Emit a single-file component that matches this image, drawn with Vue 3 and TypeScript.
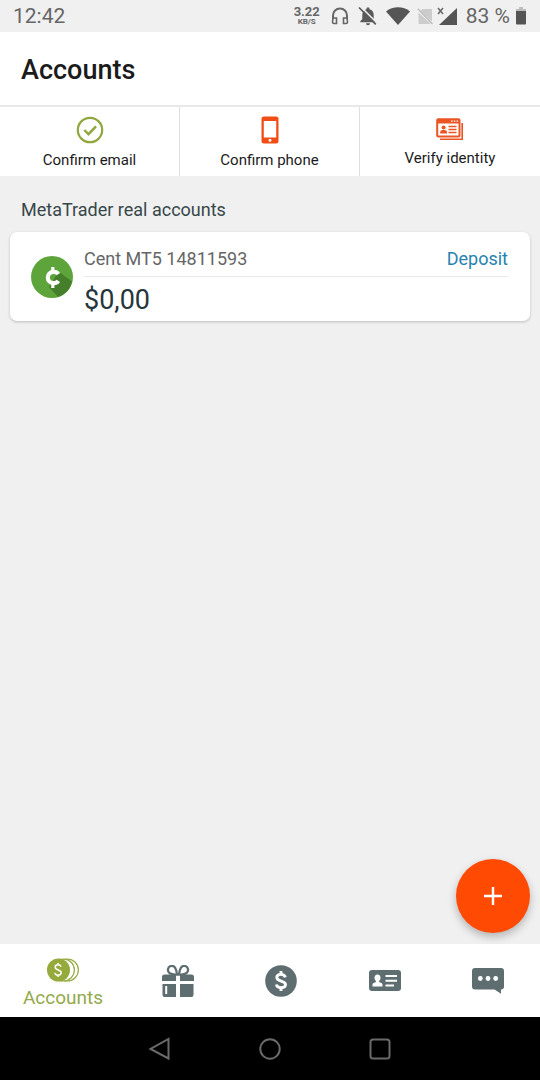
<script setup lang="ts">
import { ref } from 'vue'

interface Step {
  id: string
  label: string
}

interface Account {
  name: string
  balance: string
}

interface NavItem {
  id: string
  label: string
}

const steps: Step[] = [
  { id: 'email', label: 'Confirm email' },
  { id: 'phone', label: 'Confirm phone' },
  { id: 'identity', label: 'Verify identity' },
]

const accounts: Account[] = [{ name: 'Cent MT5 14811593', balance: '$0,00' }]

const navItems: NavItem[] = [
  { id: 'accounts', label: 'Accounts' },
  { id: 'bonuses', label: 'Bonuses' },
  { id: 'finance', label: 'Finance' },
  { id: 'profile', label: 'Profile' },
  { id: 'chat', label: 'Chat' },
]

const active = ref<string>('accounts')
</script>

<template>
  <div class="screen">
    <div class="status">
      <span class="clock">12:42</span>
      <span class="speed"><b>3.22</b><small>KB/S</small></span>
      <svg class="headset" width="18" height="18" viewBox="0 0 18 18">
        <path d="M2 12V8.500a7 7 0 0 1 14 0V12" fill="none" stroke="#666" stroke-width="2" />
        <path d="M2 11h3.500v5.500H3a1.500 1.500 0 0 1-1.500-1.500zM16 11h-3.500v5.500H15a1.500 1.500 0 0 0 1.500-1.500z" fill="none" stroke="#666" stroke-width="1.600" />
      </svg>
      <svg class="bell" width="20" height="20" viewBox="0 0 20 20">
        <path d="M10 1.200a1.500 1.500 0 0 1 1.500 1.500v.6c2.900.7 4.200 3 4.200 5.700v4l2 2.300v1H2.300v-1l2-2.300V9c0-2.700 1.300-5 4.200-5.700v-.6A1.500 1.500 0 0 1 10 1.200zM8 17.200h4a2 2 0 0 1-4 0z" fill="#595959" />
        <path d="M2.500.500 19 17" stroke="#f0f0f0" stroke-width="1.600" />
        <path d="M1 1.500 17.800 18.300" stroke="#595959" stroke-width="1.700" />
      </svg>
      <svg class="wifi" width="24" height="18" viewBox="0 0 24 18">
        <path d="M0 4.500C3.500 1.600 7.500.3 12 .3s8.500 1.300 12 4.200L12 18z" fill="#555" />
      </svg>
      <svg class="sim" width="16" height="17" viewBox="0 0 16 17">
        <path d="M5.500 1H15v12.500L3.500 2.900zM1.500 4.500 13.800 16H1.500z" fill="#ccc" />
        <path d="M.800.800 15.500 16" stroke="#bbb" stroke-width="1.400" />
      </svg>
      <svg class="signal" width="20" height="19" viewBox="0 0 20 19">
        <path d="M20 1v17H2z" fill="#555" />
        <path d="m1 1 5 6M6 1 1 7" stroke="#666" stroke-width="1.500" />
      </svg>
      <span class="percent">83 %</span>
      <svg class="battery" width="10" height="18" viewBox="0 0 10 18">
        <path d="M3 0h4v2h3v3H0V2h3z" fill="#bdbdbd" />
        <path d="M0 4h10v12.500a1 1 0 0 1-1 1H1a1 1 0 0 1-1-1z" fill="#555" />
      </svg>
    </div>

    <header class="title-bar">
      <h1>Accounts</h1>
    </header>

    <div class="steps">
      <button v-for="step in steps" :key="step.id" type="button" class="step" :class="step.id">
        <svg v-if="step.id === 'email'" width="28" height="28" viewBox="0 0 28 28" fill="none" stroke="#8fa73e">
          <circle cx="14" cy="14" r="12.200" stroke-width="2.200" />
          <path d="m8.300 14 4.200 4.200 7.500-7.800" stroke-width="2.400" />
        </svg>
        <svg v-else-if="step.id === 'phone'" width="28" height="28" viewBox="0 0 28 28">
          <path fill-rule="evenodd" fill="#f04e16" d="M8 .5h12a2.500 2.500 0 0 1 2.500 2.500v22a2.500 2.500 0 0 1-2.500 2.500H8A2.500 2.500 0 0 1 5.500 25V3A2.500 2.500 0 0 1 8 .5zM7.800 5v16.500h12.400V5zM14 22.800a1.500 1.500 0 1 0 0 3 1.500 1.500 0 0 0 0-3z" />
        </svg>
        <svg v-else width="28" height="24" viewBox="0 0 28 24">
          <path fill="none" stroke="#ea5523" stroke-width="1.600" d="M26.200 5v16.200H4" />
          <rect x="1.200" y="1.200" width="22.300" height="17.200" rx="1" fill="#fff" stroke="#ea5523" stroke-width="2" />
          <path d="M1 1h23v4.500H1z" fill="#ea5523" />
          <path d="M15 3.200h1.500M17.800 3.200h1.500M20.600 3.200h1.500" stroke="#fff" stroke-width="1.200" />
          <circle cx="7.600" cy="9.600" r="2" fill="#ea5523" />
          <path d="M4.200 15.500v-1.300c0-1.800 1.500-2.200 3.400-2.200s3.400.4 3.400 2.200v1.300z" fill="#ea5523" />
          <path d="M12.500 8.500h8M12.500 11.500h8M12.500 14.500h8" stroke="#ea5523" stroke-width="1.300" />
        </svg>
        <span>{{ step.label }}</span>
      </button>
    </div>

    <main class="content">
      <h2>MetaTrader real accounts</h2>
      <section v-for="account in accounts" :key="account.name" class="card">
        <svg class="coin" width="42" height="42" viewBox="0 0 42 42">
          <circle cx="21" cy="21" r="21" fill="#5da43b" />
          <path d="M27.500 15.500 41 25.500a21 21 0 0 1-14 15.600L18 31z" fill="#467f2c" />
          <path d="M27.300 18.200c-1-1.500-2.600-2.300-4.600-2.300-3.500 0-5.900 2.200-5.900 5.600s2.400 5.600 5.900 5.600c2 0 3.600-.8 4.600-2.300" fill="none" stroke="#fff" stroke-width="4.200" />
          <path d="M20.200 11h3.200v4h-3.200zM20.200 28h3.200v4h-3.200z" fill="#fff" />
        </svg>
        <div class="details">
          <div class="row">
            <span class="name">{{ account.name }}</span>
            <a href="#deposit">Deposit</a>
          </div>
          <div class="balance">{{ account.balance }}</div>
        </div>
      </section>
      <button type="button" class="add" aria-label="Open account">
        <svg width="20" height="20" viewBox="0 0 20 20">
          <path d="M10 1v18M1 10h18" stroke="#fff" stroke-width="2.400" />
        </svg>
      </button>
    </main>

    <nav class="tabs">
      <button
        v-for="item in navItems"
        :key="item.id"
        type="button"
        class="tab"
        :class="{ active: active === item.id }"
        :aria-label="item.label"
        @click="active = item.id"
      >
        <svg v-if="item.id === 'accounts'" width="32" height="24" viewBox="0 0 32 24">
          <g fill="#fff" stroke="#97ab45" stroke-width="1.200">
            <circle cx="20.500" cy="12" r="10.900" />
            <circle cx="16.500" cy="12" r="10.900" />
          </g>
          <circle cx="11.500" cy="12" r="11.500" fill="#94aa3a" />
          <path d="M14 8.700C13.600 7.400 12.500 6.800 11.100 6.800c-1.700 0-2.900 1-2.900 2.400 0 3.300 6 2.200 6 5.400 0 1.500-1.300 2.600-3.100 2.600-1.600 0-2.900-.8-3.200-2.300M11.100 5v2M11.100 17v2" fill="none" stroke="#fff" stroke-width="1.500" />
        </svg>
        <svg v-else-if="item.id === 'bonuses'" width="32" height="32" viewBox="0 1 32 32">
          <path d="M15 10.500C8 11 5.500 8.500 6 5.200c.5-3.600 5-4.500 7-1.500 1.100 1.700 1.800 4 2 6.800zM17 10.500c7 .5 9.500-2 9-5.300-.5-3.600-5-4.500-7-1.500-1.100 1.700-1.800 4-2 6.800z" fill="none" stroke="#5d6d70" stroke-width="2.300" />
          <path d="M2.500 10.500H14V17H0v-4a2.500 2.500 0 0 1 2.500-2.500zM18 10.500h11.500A2.500 2.500 0 0 1 32 13v4H18zM.5 20H14v13H2.500a2 2 0 0 1-2-2zM18 20h13.500v11a2 2 0 0 1-2 2H18z" fill="#5d6d70" />
          <path d="M4.200 22v8" stroke="#fff" stroke-width="2" />
        </svg>
        <svg v-else-if="item.id === 'finance'" width="32" height="32" viewBox="0 0 32 32">
          <circle cx="16" cy="16" r="15.800" fill="#5d6d70" />
          <path d="M20.300 12.400c-.5-2-2.100-3-4.300-3-2.500 0-4.200 1.300-4.200 3.200 0 4.500 8.700 2.500 8.700 7 0 1.900-1.900 3.100-4.400 3.100s-4.300-1.200-4.700-3.200M16 6v3.500M16 22.500V26" fill="none" stroke="#fff" stroke-width="2.900" />
        </svg>
        <svg v-else-if="item.id === 'profile'" width="32" height="22" viewBox="0 0 32 22">
          <rect width="32" height="21" rx="3" fill="#5d6d70" />
          <path d="M8.500 4.500c2 0 3 1.300 3 3.200 0 1.500-.6 2.500-1.400 3.200v1.100l2.200.9c.9.400 1.200 1 1.200 2v1.600h-10v-1.600c0-1 .3-1.600 1.200-2l2.200-.9v-1.100c-.8-.7-1.400-1.700-1.400-3.200 0-1.900 1-3.200 3-3.200z" fill="#fff" />
          <path d="M16.500 6h11.500M16.500 10.700h11.500M16.500 15.400H25" stroke="#fff" stroke-width="2" />
        </svg>
        <svg v-else width="32" height="26" viewBox="0 0 32 26">
          <path d="M3 0h26a3 3 0 0 1 3 3v15.500a3 3 0 0 1-3 3v4.300L22.500 21.500H3a3 3 0 0 1-3-3V3a3 3 0 0 1 3-3z" fill="#5d6d70" />
          <g fill="#fff">
            <circle cx="8.300" cy="10.500" r="2.400" />
            <circle cx="16" cy="10.500" r="2.400" />
            <circle cx="23.700" cy="10.500" r="2.400" />
          </g>
        </svg>
        <span v-if="active === item.id">{{ item.label }}</span>
      </button>
    </nav>

    <div class="system">
      <button type="button" aria-label="Back">
        <svg width="24" height="24" viewBox="0 0 24 24"><path d="M20.500 2v19.500L2.500 12z" /></svg>
      </button>
      <button type="button" aria-label="Home">
        <svg width="24" height="24" viewBox="0 0 24 24"><circle cx="12" cy="12" r="9.700" /></svg>
      </button>
      <button type="button" aria-label="Recent apps">
        <svg width="24" height="24" viewBox="0 0 24 24"><rect x="2.500" y="2.500" width="19" height="19" rx="2.500" /></svg>
      </button>
    </div>
  </div>
</template>

<style>
body {
  margin: 0;
}
</style>

<style scoped>
.screen {
  min-height: 100vh;
  display: flex;
  flex-direction: column;
  background: #f0f0f0;
  font-family: Roboto, "Liberation Sans", sans-serif;
  color: #1b1b1b;
}

button {
  font: inherit;
  color: inherit;
  border: 0;
  padding: 0;
  background: none;
  cursor: pointer;
}

svg {
  display: block;
  flex: none;
}

.status {
  height: 32px;
  padding: 0 14px 0 13px;
  display: flex;
  align-items: center;
  color: #666;
  font-size: 21px;
}

.clock {
  margin-right: auto;
}

.speed {
  display: flex;
  flex-direction: column;
  align-items: center;
  margin-right: 11px;
}

.speed b {
  font-size: 13px;
  line-height: 12px;
  font-weight: 700;
}

.speed small {
  font-size: 8px;
  line-height: 8px;
  font-weight: 700;
}

.headset {
  margin-right: 9px;
}

.bell {
  margin-right: 8px;
}

.wifi {
  margin-right: 7px;
}

.sim {
  margin-right: 4px;
}

.signal {
  margin-right: 9px;
}

.percent {
  margin-right: 6px;
}

.title-bar {
  height: 71px;
  display: flex;
  align-items: center;
  padding: 2px 21px 0;
  background: #fff;
}

h1 {
  margin: 0;
  font-size: 27px;
  line-height: 32px;
  font-weight: 500;
}

.steps {
  display: grid;
  grid-template-columns: repeat(3, 1fr);
  background: #fff;
  border-top: 2px solid #e9e9e9;
}

.step {
  height: 69px;
  padding-top: 2px;
  display: flex;
  flex-direction: column;
  align-items: center;
  justify-content: center;
  gap: 6px;
  font-size: 15px;
  line-height: 20px;
}

.step:not(:last-child) {
  border-right: 1px solid #dfdfdf;
}

.content {
  flex: 1;
  display: flex;
  flex-direction: column;
  padding: 22px 10px 11px;
}

h2 {
  margin: 0 11px 10px;
  font-size: 18px;
  line-height: 24px;
  font-weight: 400;
  color: #37474a;
}

.card {
  display: flex;
  align-items: center;
  gap: 11px;
  padding: 8px 22px 7px 21px;
  background: #fff;
  border-radius: 7px;
  box-shadow: 0 1px 3px rgba(0, 0, 0, 0.22);
}

.details {
  flex: 1;
  padding-top: 3px;
}

.row {
  display: flex;
  justify-content: space-between;
  border-bottom: 1px solid #e9e9e9;
  padding-bottom: 1px;
  font-size: 18px;
  line-height: 32px;
}

.name {
  color: #666;
}

.row a {
  color: #2683b0;
  text-decoration: none;
}

.balance {
  padding-top: 9px;
  font-size: 27px;
  line-height: 28px;
  color: #26363b;
}

.add {
  width: 74px;
  height: 74px;
  margin-top: auto;
  align-self: flex-end;
  display: grid;
  place-items: center;
  border-radius: 50%;
  background: #ff4a03;
  box-shadow: 0 4px 8px rgba(0, 0, 0, 0.25);
}

.tabs {
  height: 73px;
  display: grid;
  grid-template-columns: 126px repeat(4, 1fr);
  background: #fff;
}

.tab {
  display: flex;
  flex-direction: column;
  align-items: center;
  justify-content: center;
  gap: 4px;
}

.tab.active {
  padding-top: 6px;
  color: #94a94a;
  font-size: 19px;
  line-height: 24px;
}

.system {
  height: 63px;
  display: flex;
  justify-content: center;
  background: #000;
}

.system button {
  width: 110px;
  display: grid;
  place-items: center;
}

.system svg {
  fill: none;
  stroke: #6a6a6a;
  stroke-width: 2;
}
</style>
